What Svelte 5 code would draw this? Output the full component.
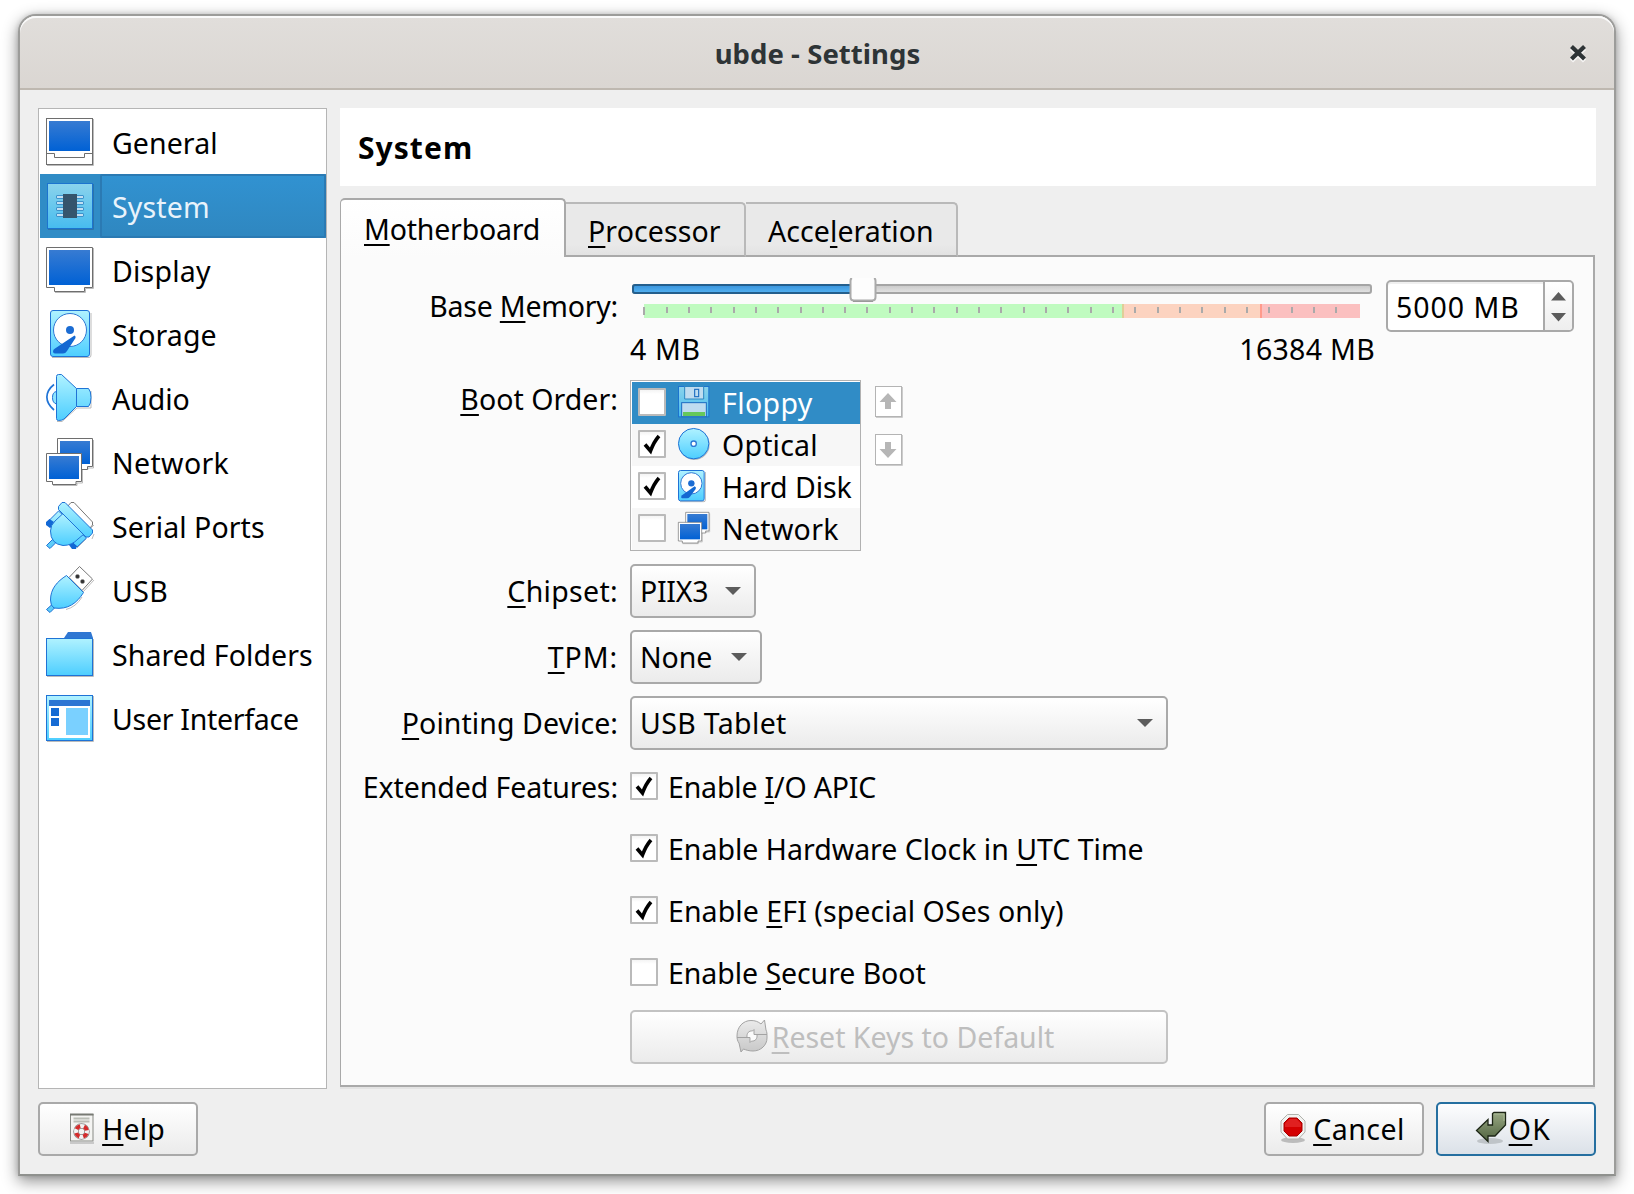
<script>
  function fit(node, width) {
    const chars = node.textContent.length;
    const natural = node.getBoundingClientRect().width;
    node.style.letterSpacing = `${(width + 2.7 - natural) / chars}px`;
  }

  const sections = [
    { id: 'general', name: 'General', w: 104 },
    { id: 'system', name: 'System', w: 96 },
    { id: 'display', name: 'Display', w: 97 },
    { id: 'disk', name: 'Storage', w: 103 },
    { id: 'audio', name: 'Audio', w: 76 },
    { id: 'network', name: 'Network', w: 115.5 },
    { id: 'serial', name: 'Serial Ports', w: 151 },
    { id: 'usb', name: 'USB', w: 54.5 },
    { id: 'folder', name: 'Shared Folders', w: 199 },
    { id: 'ui', name: 'User Interface', w: 185 }
  ];

  const boot = [
    { id: 'floppy', name: 'Floppy', on: false, w: 89 },
    { id: 'optical', name: 'Optical', on: true, w: 94 },
    { id: 'disk', name: 'Hard Disk', on: true, w: 128 },
    { id: 'network', name: 'Network', on: false, w: 115 }
  ];

  const features = [
    { label: 'Enable &I/O APIC', on: true, w: 206.5 },
    { label: 'Enable Hardware Clock in &UTC Time', on: true, w: 474 },
    { label: 'Enable &EFI (special OSes only)', on: true, w: 394 },
    { label: 'Enable &Secure Boot', on: false, w: 256 }
  ];

  const ticks = Array.from({ length: 32 }, (_, i) => Math.round(13.2 + i * 22.33));
</script>

{#snippet text(label, w)}
  {@const at = label.indexOf('&')}
  <span class="text" use:fit={w}>{#if at < 0}{label}{:else}{label.slice(0, at)}<u>{label[at + 1]}</u>{label.slice(at + 2)}{/if}</span>
{/snippet}

{#snippet check(on)}
  <span class="check">
    {#if on}
      <svg width="24" height="24" viewBox="0 0 24 24"><path d="M5 12.5 L10.5 19 C12.500 13.500 15 8.500 19 4" fill="none" stroke="#000" stroke-width="3.600" /></svg>
    {/if}
  </span>
{/snippet}

{#snippet arrow()}
  <svg class="arrow" width="16" height="8" viewBox="0 0 16 8"><path d="M0 0H16L8 8Z" fill="#5c5c5c" /></svg>
{/snippet}

{#snippet icon(id, size)}
  <svg class="icon" width={size} height={size} viewBox="0 0 48 48" overflow="visible">
    {#if id === 'general'}
      <path d="M1 47.500H47.500V1" fill="none" stroke="#bbb" />
      <rect x=".5" y=".5" width="46" height="46" fill="#fff" stroke="#6e6e6e" />
      <rect x="3" y="3" width="41" height="30" fill="url(#screen)" />
      <path d="M.5 35.500H8.500V39.500H38.500V35.500H46.500" fill="none" stroke="#6e6e6e" />
    {:else if id === 'display'}
      <path d="M9 46.500H39.500V42.500H47.500V2" fill="none" stroke="#bbb" />
      <path d="M.5 1.500H46.500V41.500H38.500V45.500H8.500V41.500H.5Z" fill="#fff" stroke="#6e6e6e" />
      <rect x="3" y="4" width="41" height="35" fill="url(#screen)" />
    {:else if id === 'system'}
      <path d="M2 47.500H47.500V2" fill="none" stroke="#2b74aa" />
      <rect x="1.500" y="1.500" width="45" height="45" fill="url(#sysbg)" stroke="#1c74cf" />
      {#each [0, 1, 2, 3] as p}
        <rect x="10.500" y={13.5 + p * 6} width="27" height="3" rx=".5" fill="#c3dff2" stroke="#3d93cc" />
      {/each}
      <rect x="17" y="12" width="14" height="24" fill="#35556d" />
    {:else if id === 'disk'}
      <path d="M6 47.500H43Q45 47.500 45 45V3" fill="none" stroke="#bbb" />
      <rect x="4.500" y=".5" width="39" height="46" rx="2.500" fill="url(#ice)" stroke="#1f73d6" />
      <circle cx="24" cy="20" r="16.500" fill="#fff" stroke="#2e78d4" />
      <circle cx="24" cy="20" r="4" fill="#1b6cd3" />
      <path d="M28.500 25.500Q30 26 29.500 28L21 41Q19.500 43.500 17 43.500H9Q7 43.500 7 41.500Q7 39.500 9 38.500Z" fill="#1368d2" />
    {:else if id === 'audio'}
      <path d="M11 47.500H16L31 34H45V17" fill="none" stroke="#bbb" />
      <path d="M10.500 17.500Q6.500 18 6.500 23.500T10.500 30" fill="#8ee5fd" stroke="#1f73d6" />
      <path d="M8 10.500C-1.500 18 -1.500 28 8 36" fill="none" stroke="#1f73d6" stroke-width="1.700" />
      <path d="M10.500 2.500Q10.500 .5 12.500 .5H15.500L30.500 14.500H42.500Q45 17 45 23.500T42.500 32.500H30.500L18 45Q16 46.500 12.500 46.500Q10.500 46.500 10.500 44.500Z" fill="url(#ice)" stroke="#1f73d6" />
      <path d="M30.500 14.500V32.500" stroke="#1f73d6" />
    {:else if id === 'network'}
      <path d="M42 31.500V30H47.500V2M7 47.500H31V45H36.500V17" fill="none" stroke="#bbb" />
      <path d="M11.500 .5H46.500V28.500H41.500V31.500H17V28.500H11.500Z" fill="#fff" stroke="#6e6e6e" />
      <rect x="14" y="3" width="30" height="23" fill="url(#screen)" />
      <path d="M.5 15.500H35.500V43.500H30V46.500H6.500V43.500H.5Z" fill="#fff" stroke="#6e6e6e" />
      <rect x="3" y="18" width="30" height="23" fill="url(#screen)" />
    {:else if id === 'serial'}
      <path d="M44 27L48 23M46 37L48 32M31 46L40 37" fill="none" stroke="#bbb" />
      <path d="M21 5L25 .5H28L46.500 20V23L43 27Z" fill="#fff" stroke="#777" />
      <path d="M3.500 18L12.500 9L17 13L8 22ZM35 31L40.500 36L31 45L26 40Z" fill="url(#ice)" stroke="#1f73d6" />
      <path d="M3.500 17L8 20V24L4 26L0 23V20ZM25 39L31 44L30 47H26L23 43Z" fill="#1268d5" />
      <path d="M.5 43.500L7 37L10 40.500L4 46.500Z" fill="#5fcdf8" stroke="#1f73d6" />
      <path d="M17 11.500L38 32L32 37Q26 43.500 17 43.500Q4.500 42 4.500 29Q4.500 23 9 19Z" fill="url(#ice)" stroke="#1f73d6" />
      <path d="M12.500 4.500L16 .5H19L46.500 28V31L43 35H40L12.500 7.500Z" fill="url(#ice)" stroke="#1f73d6" />
    {:else if id === 'usb'}
      <path d="M37 26L48 14M20 43.500Q30 41 36 31" fill="none" stroke="#bbb" />
      <path d="M23 11.500L33.500 .5L46.500 13L36 24.500Z" fill="#fff" stroke="#777" />
      <path d="M29.500 10.500H33.500M31.500 8.500V12.500M34.500 15.500H38.500M36.500 13.500V17.500" stroke="#333" stroke-width="2.500" />
      <path d="M.5 43.500L5.500 39L8.500 42L4 46.500Z" fill="#5fcdf8" stroke="#1f73d6" />
      <path d="M20.500 9.500L37.500 26.500C31 37 22 44 8 42Q4.500 40 4.500 34C4.500 23 11 15.500 20.500 9.500Z" fill="url(#ice)" stroke="#1f73d6" />
    {:else if id === 'folder'}
      <path d="M1 46.500H47.500V9" fill="none" stroke="#bbb" />
      <path d="M18 8L22 2H45L47 8V12H18Z" fill="#2f77d2" />
      <rect x=".5" y="8.500" width="46" height="37" fill="url(#ice)" stroke="#1f73d6" />
    {:else if id === 'ui'}
      <path d="M1 47.500H47.500V2" fill="none" stroke="#bbb" />
      <rect x=".5" y="1.500" width="46" height="45" fill="url(#ice)" stroke="#1f73d6" />
      <rect x="3" y="6" width="41" height="38" fill="#fff" />
      <path d="M3 6H44V12H3Z" fill="#2c75d3" />
      <path d="M5 14H13V22H5ZM5 24H13V32H5Z" fill="#166bd4" />
      <rect x="20" y="14" width="22" height="27" fill="#7ad0ff" />
    {:else if id === 'floppy'}
      <rect x=".75" y=".75" width="45.500" height="45.500" fill="url(#sysbg)" stroke="#1c74cf" stroke-width="1.500" />
      <path d="M10 .75V19.500H38.500V.75Z" fill="#bfdcf0" stroke="#2d86c0" stroke-width="1.500" />
      <rect x="25" y="5" width="6" height="11" fill="none" stroke="#1c6cc0" stroke-width="1.700" />
      <rect x="5.500" y="25" width="37" height="21" fill="#bfdcf0" stroke="#1c6cc0" stroke-width="1.500" />
      <rect x="7.500" y="39" width="33" height="6" fill="#66c85c" />
    {:else if id === 'optical'}
      <circle cx="24.500" cy="25" r="23" fill="#bbb" />
      <circle cx="23.500" cy="23.500" r="22.800" fill="url(#ice)" stroke="#1f73d6" stroke-width="1.500" />
      <circle cx="23.500" cy="23.500" r="4" fill="#fff" stroke="#2e78d4" stroke-width="2" />
    {:else if id === 'smalldisk'}
      <path d="M3 47.500H39Q41 47.500 41 45V3" fill="none" stroke="#bbb" stroke-width="1.500" />
      <rect x=".75" y=".75" width="38.500" height="45.500" rx="3" fill="url(#ice)" stroke="#1f73d6" stroke-width="1.500" />
      <circle cx="20" cy="20" r="16" fill="#fff" stroke="#2e78d4" stroke-width="1.500" />
      <circle cx="20" cy="20" r="4.800" fill="#1b6cd3" />
      <path d="M25 24.500Q28 26 26.500 28.500L18 40Q16 42.500 13.500 42.500H6Q3.500 41.500 6 38Z" fill="#1368d2" />
    {/if}
  </svg>
{/snippet}

{#snippet combo(label, w, size)}
  <div class="button combo {size}">{@render text(label, w)}{@render arrow()}</div>
{/snippet}

<svg class="defs" width="0" height="0">
  <defs>
    <linearGradient id="screen" x2="0" y2="1"><stop stop-color="#377bd2" /><stop offset="1" stop-color="#0061d5" /></linearGradient>
    <linearGradient id="ice" x2="0" y2="1"><stop stop-color="#b0f2ff" /><stop offset="1" stop-color="#4dceff" /></linearGradient>
    <linearGradient id="sysbg" x2="0" y2="1"><stop stop-color="#8bd3ec" /><stop offset="1" stop-color="#46bcef" /></linearGradient>
    <linearGradient id="fillblue" x2="0" y2="1"><stop stop-color="#3893dc" /><stop offset="1" stop-color="#55b3f2" /></linearGradient>
    <linearGradient id="groove" x2="0" y2="1"><stop stop-color="#c8c8c8" /><stop offset="1" stop-color="#e4e4e4" /></linearGradient>
    <linearGradient id="gray" x2="0" y2="1"><stop stop-color="#ebebeb" /><stop offset="1" stop-color="#c8c8c8" /></linearGradient>
    <linearGradient id="olive" x2="0" y2="1"><stop stop-color="#9aa984" /><stop offset="1" stop-color="#4e613e" /></linearGradient>
  </defs>
</svg>

<div class="window">
  <header class="titlebar">
    <span></span>
    <h1>{@render text('ubde - Settings', 204)}</h1>
    <svg class="close" width="18" height="20" viewBox="0 0 18 20">
      <path d="M2.500 5.500L15.500 18M15.500 5.500L2.500 18" stroke="#f7f6f5" stroke-width="4.500" />
      <path d="M2.500 3.500L15.500 16M15.500 3.500L2.500 16" stroke="#2e3436" stroke-width="4.200" />
    </svg>
  </header>

  <main>
    <nav>
      {#each sections as s}
        <div class="section" class:selected={s.id === 'system'}>
          <span class="slot">{@render icon(s.id, 48)}</span>
          <span class="name">{@render text(s.name, s.w)}</span>
        </div>
      {/each}
    </nav>

    <section class="page">
      <h2>{@render text('System', 113.5)}</h2>
      <div class="tabs">
        <div class="tab active">{@render text('&Motherboard', 174.5)}</div>
        <div class="tab second">{@render text('&Processor', 131)}</div>
        <div class="tab third">{@render text('Acce&leration', 164)}</div>
        <div class="rest"></div>
      </div>

      <div class="pane">
        <div class="row memory">
          <span class="label">{@render text('Base &Memory:', 187)}</span>
          <div class="slider">
            <svg width="744" height="44" viewBox="0 0 744 44">
              <rect x="3" y="7" width="738" height="8" rx="2" fill="url(#groove)" stroke="#a5a5a5" stroke-width="2" />
              <rect x="3" y="7" width="222" height="8" rx="2" fill="url(#fillblue)" stroke="#245f8d" stroke-width="2" />
              <path d="M222 0Q220.500 .5 220.500 3V19Q220.500 22.500 224 22.500H242Q245.500 22.500 245.500 19V3Q245.500 .5 244 0" fill="#fdfdfd" stroke="#aaa" stroke-width="2" />
              <path d="M223 23.500H243" stroke="#999" />
              <rect x="14" y="26" width="479" height="14" fill="#c0fbc0" />
              <rect x="493" y="26" width="138" height="14" fill="#fcd3c0" />
              <rect x="631" y="26" width="99" height="14" fill="#fbc0c0" />
              <rect x="492" y="26" width="2" height="14" fill="#dfcf98" />
              <rect x="630" y="26" width="2" height="14" fill="#ff9b8c" />
              {#each ticks as x, i}
                <rect {x} y="29" width="2" height={i ? 6 : 8} fill="#aaa" />
              {/each}
            </svg>
            <div class="bounds">{@render text('4 MB', 69)}{@render text('16384 MB', 134)}</div>
          </div>
          <div class="spin">
            <span class="value">{@render text('5000 MB', 122)}</span>
            <svg class="steps" width="27" height="48" viewBox="0 0 27 48">
              <path d="M6 18.500L13.500 10L21 18.500ZM6 31H21L13.500 39.500Z" fill="#5c5c5c" />
            </svg>
          </div>
        </div>

        <div class="row boot">
          <span class="label">{@render text('&Boot Order:', 156)}</span>
          <div class="list">
            {#each boot as b, i}
              <div class="item" class:alt={i % 2} class:selected={i === 0}>
                {@render check(b.on)}
                <span class="small">{@render icon(b.id === 'disk' ? 'smalldisk' : b.id, 32)}</span>
                {@render text(b.name, b.w)}
              </div>
            {/each}
          </div>
          <div class="movers">
            <svg width="28" height="32" viewBox="0 0 28 32">
              <path d="M1 31.500H27.500V1" fill="none" stroke="#ccc" />
              <rect x=".5" y=".5" width="26" height="30" fill="#fff" stroke="#b4b4b4" />
              <path d="M13 7L21.500 16H16V23H10V16H4.500Z" fill="#b6b6b6" />
            </svg>
            <svg width="28" height="32" viewBox="0 0 28 32">
              <path d="M1 31.500H27.500V1" fill="none" stroke="#ccc" />
              <rect x=".5" y=".5" width="26" height="30" fill="#fff" stroke="#b4b4b4" />
              <path d="M13 24L21.500 15H16V8H10V15H4.500Z" fill="#b6b6b6" />
            </svg>
          </div>
        </div>

        <div class="row"><span class="label">{@render text('&Chipset:', 109)}</span>{@render combo('PIIX3', 66.5, 'chipset')}</div>
        <div class="row"><span class="label">{@render text('&TPM:', 68.5)}</span>{@render combo('None', 70.5, 'tpm')}</div>
        <div class="row"><span class="label">{@render text('&Pointing Device:', 214.5)}</span>{@render combo('USB Tablet', 145, 'wide')}</div>

        <div class="features">
          {#each features as f, i}
            <div class="row feature">
              <span class="label">{#if i === 0}{@render text('Extended Features:', 253.5)}{/if}</span>
              {@render check(f.on)}
              <span class="caption">{@render text(f.label, f.w)}</span>
            </div>
          {/each}
        </div>

        <div class="row reset">
          <span class="label"></span>
          <div class="button wide disabled">
            <svg width="32" height="34" viewBox="0 0 32 34">
              <path d="M1 17C1 8 7 1.500 15 1.500C19 1.500 22 2.500 25 5L28.500 1L30 11C31 13 31 15 31 17V19C31 26 25 32 17 32C13 32 10 31 7.500 30L5 33L3 24C1.500 22 1 20 1 17Z" fill="url(#gray)" stroke="#a3a3a3" />
              <path d="M1 18.500H11M21 15.500H31" stroke="#a3a3a3" />
              <path d="M11 18.500C10.500 14 13 11.500 16.500 12L18 10.500V15.500H21C21.500 20 19 22.500 15.500 22L14 23.500V18.500Z" fill="#fafafa" stroke="#a3a3a3" />
            </svg>
            {@render text('&Reset Keys to Default', 281)}
          </div>
        </div>
      </div>
    </section>
  </main>

  <footer>
    <div class="button action help">
      <svg width="26" height="32" viewBox="0 0 26 32">
        <path d="M1 31H25" stroke="#c9c9c9" stroke-width="2" />
        <rect x="1.500" y="2.500" width="22.500" height="26.500" fill="#f4f4f2" stroke="#888a85" />
        <path d="M1 2.500H24.500" stroke="#777973" stroke-width="2" />
        <path d="M4.500 6.500H20.500M4.500 9.500H20.500" stroke="#babdb6" stroke-width="2" />
        <circle cx="12.500" cy="19.500" r="5.500" fill="none" stroke="#888" stroke-width="5.500" />
        <circle cx="12.500" cy="19.500" r="5.500" fill="none" stroke="#f3f3f3" stroke-width="4" />
        <circle cx="12.500" cy="19.500" r="5.500" fill="none" stroke="#d42c2c" stroke-width="4" stroke-dasharray="4.600 4.040" stroke-dashoffset="-2" />
      </svg>
      {@render text('&Help', 61)}
    </div>
    <span class="space"></span>
    <div class="button action cancel">
      <svg width="28" height="32" viewBox="0 0 28 32">
        <ellipse cx="14" cy="28" rx="12" ry="3" fill="#bcbcbc" />
        <path d="M8.500 2.500H19.500L26 9V20L19.500 27H8.500L2 20V9Z" fill="#f2f2f0" stroke="#b0b2ac" />
        <path d="M10 6H18L23 11V19L18 24H10L5 19V11Z" fill="#d40000" stroke="#a80000" />
        <path d="M10.500 7H17.500L22 11.500V15H6V11.500Z" fill="#e02020" />
      </svg>
      {@render text('&Cancel', 90)}
    </div>
    <div class="button action primary">
      <svg width="32" height="34" viewBox="0 0 32 34">
        <ellipse cx="15" cy="30" rx="13" ry="3" fill="#bfc4c8" />
        <path d="M17.500 2.500L19 1.500H30.500V14L20 25H13V30.500L1.500 19.500L13 8.500V14H17.500Z" fill="url(#olive)" stroke="#1d2616" stroke-width="1.300" />
        <path d="M19 3H29V10" fill="none" stroke="#a9b896" />
      </svg>
      {@render text('&OK', 41)}
    </div>
  </footer>
</div>

<style>
  :global(body) { margin: 0; background: #fff; overflow: hidden; }
  :global(#app) { height: 1194px; overflow: hidden; }
  .defs { display: block; }
  svg { display: block; flex: none; }
  .window {
    box-sizing: border-box; width: 1598px; height: 1162px; margin: 14px 18px;
    border: 2px solid #9c9c9a; border-bottom-color: #8f918e; border-radius: 18px 18px 0 0;
    background: #efefef; color: #000; display: flex; flex-direction: column;
    font: 28.5px/36px 'Noto Sans', sans-serif;
    box-shadow: 0 5px 16px rgba(0, 0, 0, .45), 0 0 5px rgba(0, 0, 0, .15);
  }
  .text { display: inline-block; white-space: pre; flex: none; padding-left: 1px; }
  u { text-decoration: underline 2px; text-underline-offset: 4px; text-decoration-skip-ink: none; }
  h1, h2 { margin: 0; font-weight: 700; }

  .titlebar {
    box-sizing: border-box; height: 74px; padding: 3px 27px 0 0; flex: none;
    display: grid; grid-template-columns: 45px 1fr 18px; align-items: center;
    background: linear-gradient(#e1dedb, #dad6d2); border-bottom: 2px solid #beb8b0;
    border-radius: 16px 16px 0 0; box-shadow: inset 0 2px #fafafa;
  }
  h1 { font-size: 27.5px; line-height: 36px; color: #2e3436; text-align: center; padding-top: 1px; }
  .close { margin-bottom: 2px; }

  main { display: flex; gap: 13px; padding: 18px 18px 0; }
  nav {
    box-sizing: border-box; width: 289px; height: 981px; flex: none; padding: 1px 0 0 1px;
    border: 1px solid #b5b5b5; background: #fff;
  }
  .section { display: flex; height: 64px; }
  .slot { box-sizing: border-box; width: 60px; padding: 8px 6px; flex: none; }
  .name { box-sizing: border-box; flex: 1; display: flex; align-items: center; padding: 2px 0 0 11px; }
  .section.selected { background: #308cc6; color: #e9f3fb; }
  .section.selected .name {
    border: 2px solid #2b7ab3; border-radius: 2px; padding-left: 9px;
    background: linear-gradient(#3192d1, #2f87c0);
  }

  .page { flex: 1; }
  h2 { box-sizing: border-box; height: 78px; padding: 22px 0 0 17px; background: #fff; font-size: 30px; line-height: 36px; }
  .tabs { display: flex; align-items: flex-end; height: 59px; margin-top: 12px; }
  .tab {
    box-sizing: border-box; height: 55px; border: 2px solid #b9b9b9; border-left: 0; border-bottom-color: #a9a9a9;
    border-radius: 0 5px 0 0; padding: 9px 0 0 21px; background: linear-gradient(#e9e9e9 80%, #e2e2e2);
  }
  .tab.active {
    width: 226px; height: 59px; border: 2px solid #a9a9a9; border-left-width: 1px; border-bottom: 0;
    border-radius: 5px 5px 0 0; padding: 11px 0 0 22px; background: linear-gradient(#fff, #fbfbfb);
  }
  .second { width: 180px; }
  .third { width: 212px; }
  .rest { flex: 1; margin-right: 1px; border-bottom: 2px solid #a9a9a9; }

  .pane {
    box-sizing: border-box; width: 1255px; height: 830px; padding-top: 21px; display: flex; flex-direction: column; gap: 12px;
    border: solid #a9a9a9; border-width: 0 2px 2px 1px; background: #fbfbfb; box-shadow: 0 2px #e3e3e3;
  }
  .row { display: flex; align-items: center; }
  .label { width: 277px; margin-right: 12px; text-align: right; flex: none; }
  .memory { height: 90px; align-items: flex-start; }
  .memory .label { padding-top: 10px; }
  .slider { width: 744px; }
  .bounds { display: flex; justify-content: space-between; margin: 9px -1px 0 -1px; }
  .spin {
    box-sizing: border-box; display: flex; width: 188px; height: 52px; margin: 2px 0 0 12px;
    border: 2px solid #a9a9a9; border-radius: 5px; background: #fff; box-shadow: inset 0 2px #f0f0f0;
  }
  .value { flex: 1; padding: 7px 0 0 7px; }
  .steps { border-left: 2px solid #a9a9a9; background: linear-gradient(#fff, #eee); border-radius: 0 4px 4px 0; }

  .boot { align-items: flex-start; height: 172px; }
  .boot .label { padding-top: 1px; }
  .list { box-sizing: border-box; width: 231px; height: 171px; border: 1px solid #b1b1b1; padding: 1px 0 0 1px; background: #fff; }
  .item { display: flex; align-items: center; height: 42px; padding-left: 6px; box-sizing: border-box; }
  .item.alt { background: #f7f7f7; }
  .item.selected { background: #308cc6; color: #fff; }
  .small { margin: 0 11px 2px 12px; }
  .check {
    box-sizing: border-box; width: 28px; height: 28px; border: 2px solid #bababa; border-radius: 1px;
    background: linear-gradient(#f4f4f4, #fff 4px); flex: none;
  }
  .item .check { margin-bottom: 2px; }
  .movers { display: flex; flex-direction: column; gap: 16px; margin: 6px 0 0 14px; }

  .button {
    box-sizing: border-box; height: 54px; border: 2px solid #a9a9a9; border-radius: 5px;
    background: linear-gradient(#fff, #ebebeb); display: flex; align-items: center;
  }
  .combo { justify-content: space-between; padding: 0 13px 0 7px; }
  .combo .arrow { margin-bottom: 1px; }
  .chipset { width: 126px; }
  .tpm { width: 132px; }
  .wide { width: 538px; }
  .features { display: flex; flex-direction: column; gap: 34px; padding-top: 10px; }
  .feature { height: 28px; }
  .feature .label, .caption { padding-top: 2px; }
  .caption { padding-left: 9px; }
  .reset { margin-top: 12px; }
  .disabled { justify-content: center; color: #bebebe; border-color: #c3c3c3; gap: 3px; padding-right: 8px; }
  .disabled svg { margin: 0 0 3px; }

  footer { display: flex; align-items: center; gap: 12px; padding: 13px 18px 0; }
  .space { flex: 1; }
  .action { width: 160px; justify-content: center; }
  .action svg { margin-bottom: 3px; }
  .help { gap: 6px; padding-right: 2px; }
  .cancel { gap: 5px; padding-right: 4px; }
  .primary { border-color: #256fa0; background: linear-gradient(#fdfdfe, #dbe1e8); gap: 1px; padding-right: 6px; }
</style>
